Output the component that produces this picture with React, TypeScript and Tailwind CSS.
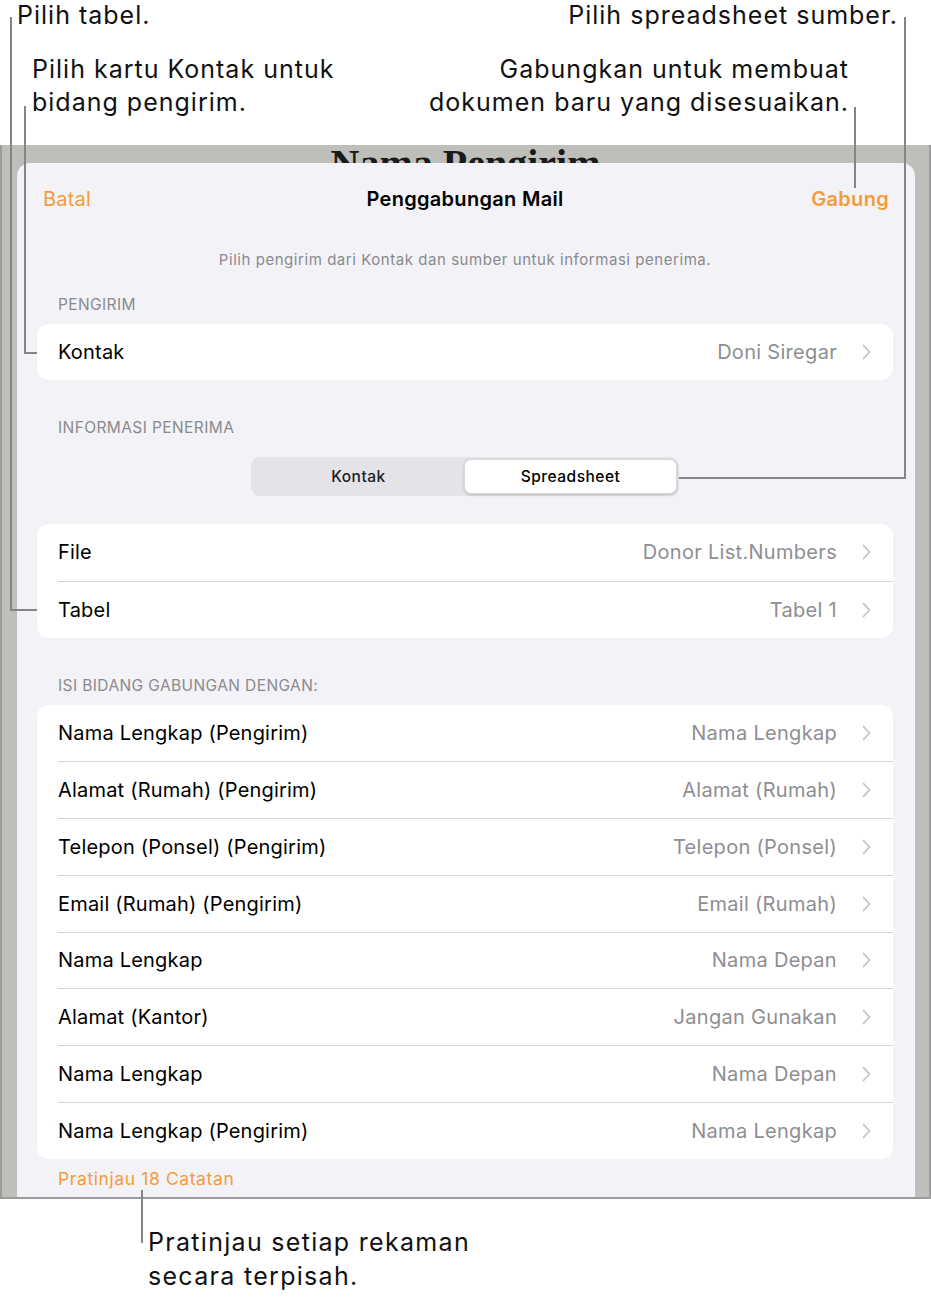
import React from "react";

const Chevron = () => (
  <svg width="9" height="16" viewBox="0 0 9 16" fill="none" className="ml-[25px] shrink-0">
    <path d="M1.5 1.5 L7.5 8 L1.5 14.5" stroke="#c4c4c7" strokeWidth="1.8" strokeLinecap="round" strokeLinejoin="round" />
  </svg>
);

type RowProps = { label: string; value: string; first?: boolean };

const Row = ({ label, value, first }: RowProps) => (
  <div className="flex h-[56.75px] pl-[21px]">
    <div
      className={
        "flex flex-1 items-center pr-[22px] " + (first ? "" : "border-t border-[#d4d4d8]")
      }
    >
      <span className="flex-1 text-[20px] tracking-[0.2px] text-black">{label}</span>
      <span className="text-[20px] tracking-[0.3px] text-[#8e8e93]">{value}</span>
      <Chevron />
    </div>
  </div>
);

const SectionHeader = ({ children, className = "" }: { children: React.ReactNode; className?: string }) => (
  <div className={"pl-[21px] text-[15.5px] leading-[20px] tracking-[0.4px] text-[#8a8a8e] uppercase " + className}>
    {children}
  </div>
);

const mergeRows: [string, string][] = [
  ["Nama Lengkap (Pengirim)", "Nama Lengkap"],
  ["Alamat (Rumah) (Pengirim)", "Alamat (Rumah)"],
  ["Telepon (Ponsel) (Pengirim)", "Telepon (Ponsel)"],
  ["Email (Rumah) (Pengirim)", "Email (Rumah)"],
  ["Nama Lengkap", "Nama Depan"],
  ["Alamat (Kantor)", "Jangan Gunakan"],
  ["Nama Lengkap", "Nama Depan"],
  ["Nama Lengkap (Pengirim)", "Nama Lengkap"],
];

export default function App() {
  return (
    <div className="relative w-[931px] h-[1303px] bg-white overflow-hidden font-['Inter','Noto_Sans',sans-serif] text-black">
      {/* top annotations */}
      <div className="flex h-[145px] justify-between text-[25px] tracking-[1px] text-[#111]">
        <div className="pl-[17px]">
          <div className="leading-[34px] -mt-[2px]">Pilih tabel.</div>
          <div className="ml-[15px] mt-[21px] leading-[33px]">
            Pilih kartu Kontak untuk
            <br />
            bidang pengirim.
          </div>
        </div>
        <div className="pr-[33px] text-right">
          <div className="leading-[34px] -mt-[2px]">Pilih spreadsheet sumber.</div>
          <div className="mr-[49px] mt-[21px] leading-[33px]">
            Gabungkan untuk membuat
            <br />
            dokumen baru yang disesuaikan.
          </div>
        </div>
      </div>

      {/* grey frame */}
      <div className="relative h-[1054px] bg-[#bebfbb] border-x-2 border-b-2 border-[#9c9c9c] overflow-hidden">
        <div className="absolute left-0 right-0 top-[-1px] text-center font-['Liberation_Serif',serif] font-bold text-[40px] leading-[40px] text-[#1a1a1a]">
          Nama Pengirim
        </div>
        <div className="relative ml-[15px] mt-[18px] w-[898px] h-[1036px] rounded-t-[13px] bg-[#f2f2f7] pl-[20px] pr-[22px]">
          {/* nav */}
          <div className="relative flex h-[72px] items-center justify-between pl-[6px] pr-[4px]">
            <span className="text-[20px] tracking-[0.2px] text-[#f39c3c]">Batal</span>
            <span className="absolute left-0 right-0 text-center text-[20px] tracking-[0.3px] font-semibold text-black pointer-events-none">
              Penggabungan Mail
            </span>
            <span className="text-[20px] tracking-[0.3px] font-semibold text-[#f39c3c]">Gabung</span>
          </div>
          <div className="mt-[15px] text-center text-[15px] leading-[20px] tracking-[0.55px] text-[#8a8a8e]">
            Pilih pengirim dari Kontak dan sumber untuk informasi penerima.
          </div>

          <SectionHeader className="mt-[25px]">Pengirim</SectionHeader>
          <div className="mt-[9px] rounded-[12px] bg-white">
            <div className="flex h-[56px] items-center pl-[21px] pr-[22px]">
              <span className="flex-1 text-[20px] tracking-[0.2px]">Kontak</span>
              <span className="text-[20px] tracking-[0.3px] text-[#8e8e93]">Doni Siregar</span>
              <Chevron />
            </div>
          </div>

          <SectionHeader className="mt-[38px]">Informasi Penerima</SectionHeader>
          <div className="mt-[19px] flex justify-center">
            <div className="flex h-[39px] w-[428px] rounded-[9px] bg-[#e3e3e8] p-[2px]">
              <div className="flex flex-1 items-center justify-center text-[15.5px] tracking-[0.5px] font-medium text-[#1c1c1e]">
                Kontak
              </div>
              <div className="flex flex-1 items-center justify-center rounded-[7px] bg-white text-[15.5px] tracking-[0.5px] font-medium text-black shadow-[0_1px_3px_rgba(0,0,0,0.18)] border border-[#d8d8dc]">
                Spreadsheet
              </div>
            </div>
          </div>

          <div className="mt-[28px] rounded-[12px] bg-white overflow-hidden">
            <Row label="File" value="Donor List.Numbers" first />
            <Row label="Tabel" value="Tabel 1" />
          </div>

          <SectionHeader className="mt-[38px]">Isi bidang gabungan dengan:</SectionHeader>
          <div className="mt-[9px] rounded-[12px] bg-white overflow-hidden">
            {mergeRows.map(([l, v], i) => (
              <Row key={i} label={l} value={v} first={i === 0} />
            ))}
          </div>

          <div className="mt-[10px] pl-[21px] text-[17.5px] leading-[20px] tracking-[0.6px] text-[#f39c3c]">
            Pratinjau 18 Catatan
          </div>
        </div>
      </div>

      {/* bottom annotation */}
      <div className="pl-[148px] mt-[26px] text-[25px] leading-[34px] tracking-[1.3px] text-[#111]">
        Pratinjau setiap rekaman
        <br />
        secara terpisah.
      </div>

      {/* leader lines */}
      <div className="absolute left-[10px] top-[17px] w-[2px] h-[594px] bg-[#858585]" />
      <div className="absolute left-[10px] top-[609px] w-[27px] h-[2px] bg-[#858585]" />
      <div className="absolute left-[24px] top-[106px] w-[2px] h-[248px] bg-[#858585]" />
      <div className="absolute left-[24px] top-[352px] w-[13px] h-[2px] bg-[#858585]" />
      <div className="absolute left-[904px] top-[17px] w-[2px] h-[462px] bg-[#858585]" />
      <div className="absolute left-[679px] top-[477px] w-[227px] h-[2px] bg-[#858585]" />
      <div className="absolute left-[854px] top-[107px] w-[2px] h-[81px] bg-[#858585]" />
      <div className="absolute left-[141px] top-[1190px] w-[2px] h-[53px] bg-[#858585]" />
    </div>
  );
}
